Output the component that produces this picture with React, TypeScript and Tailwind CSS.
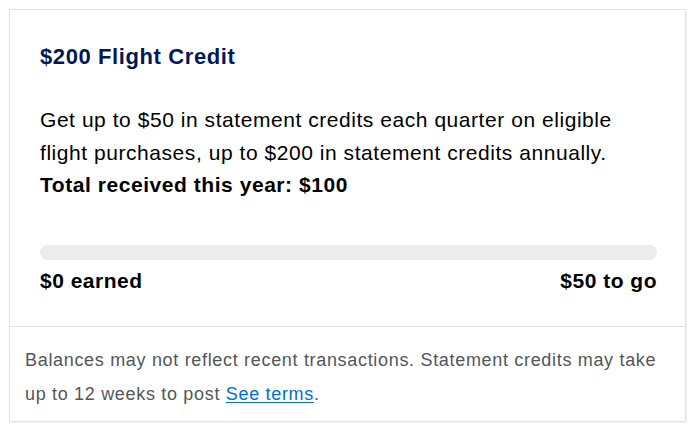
export default function App() {
  return (
    <div className="w-[700px] h-[436px] bg-white pt-[9px] pl-[9px] font-['Liberation_Sans',Arial,sans-serif]">
      <div className="w-[677px] border border-[#e2e2e2] shadow-[1px_1px_1px_rgba(0,0,0,0.05)] bg-white">
        <div className="pl-[30px] pr-[28px] pt-[32px] pb-[31px]">
          <h2 className="text-[22px] leading-[30px] tracking-[0.6px] font-bold text-[#00175a]">$200 Flight Credit</h2>
          <p className="mt-[32px] text-[21px] leading-[32.5px] tracking-[0.55px] text-black">
            Get up to $50 in statement credits each quarter on eligible flight purchases, up to $200 in
            statement credits annually.
            <br />
            <span className="font-bold">Total received this year: $100</span>
          </p>
          <div className="mt-[43px] h-[15px] w-full rounded-full bg-[#ececec]" />
          <div className="mt-[7px] flex justify-between text-[21px] leading-[28px] tracking-[0.5px] font-bold text-black">
            <span>$0 earned</span>
            <span>$50 to go</span>
          </div>
        </div>
        <div className="border-t border-[#e2e2e2] px-[15px] pt-[16px] pb-[10px] text-[18px] leading-[34px] tracking-[0.68px] text-[#53565a]">
          Balances may not reflect recent transactions. Statement credits may take up to 12 weeks to post{' '}
          <a href="#" className="text-[#006fcf] underline underline-offset-2">
            See terms
          </a>
          .
        </div>
      </div>
    </div>
  )
}
